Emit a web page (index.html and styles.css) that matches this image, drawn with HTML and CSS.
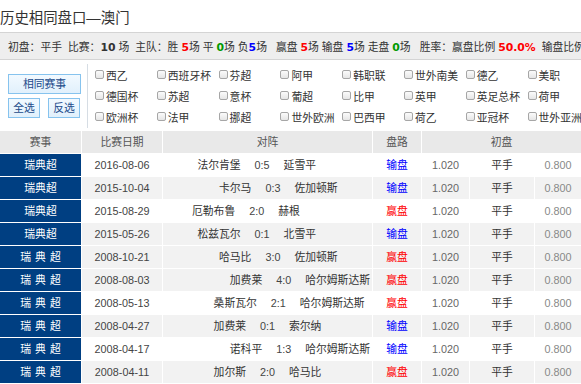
FILE: index.html
```html
<!DOCTYPE html>
<html lang="zh-CN">
<head>
<meta charset="utf-8">
<title>历史相同盘口—澳门</title>
<link rel="stylesheet" href="styles.css">
</head>
<body>
<div class="page">
  <h2 class="title">历史相同盘口—澳门</h2>
  <div class="summary">初盘：平手&nbsp; 比赛：<b class="n">10</b>&nbsp;场&nbsp; 主队：胜 <b class="n r">5</b>场 平 <b class="n g">0</b>场 负<b class="n b">5</b>场&nbsp;&nbsp; 赢盘 <b class="n r">5</b>场 输盘 <b class="n b">5</b>场 走盘 <b class="n g">0</b>场&nbsp;&nbsp; 胜率：赢盘比例 <b class="n r">50.0%</b>&nbsp; 输盘比例 <b class="n b">50.0%</b></div>
  <div class="filter">
    <div class="btns">
      <button class="btn wide">相同赛事</button>
      <div class="btn-row">
        <button class="btn">全选</button>
        <button class="btn">反选</button>
      </div>
    </div>
    <div class="leagues">
      <label class="lg"><span class="cb"></span>西乙</label>
      <label class="lg"><span class="cb"></span>西班牙杯</label>
      <label class="lg"><span class="cb"></span>芬超</label>
      <label class="lg"><span class="cb"></span>阿甲</label>
      <label class="lg"><span class="cb"></span>韩职联</label>
      <label class="lg"><span class="cb"></span>世外南美</label>
      <label class="lg"><span class="cb"></span>德乙</label>
      <label class="lg"><span class="cb"></span>美职</label>
      <label class="lg"><span class="cb"></span>德国杯</label>
      <label class="lg"><span class="cb"></span>苏超</label>
      <label class="lg"><span class="cb"></span>意杯</label>
      <label class="lg"><span class="cb"></span>葡超</label>
      <label class="lg"><span class="cb"></span>比甲</label>
      <label class="lg"><span class="cb"></span>英甲</label>
      <label class="lg"><span class="cb"></span>英足总杯</label>
      <label class="lg"><span class="cb"></span>荷甲</label>
      <label class="lg"><span class="cb"></span>欧洲杯</label>
      <label class="lg"><span class="cb"></span>法甲</label>
      <label class="lg"><span class="cb"></span>挪超</label>
      <label class="lg"><span class="cb"></span>世外欧洲</label>
      <label class="lg"><span class="cb"></span>巴西甲</label>
      <label class="lg"><span class="cb"></span>荷乙</label>
      <label class="lg"><span class="cb"></span>亚冠杯</label>
      <label class="lg"><span class="cb"></span>世外亚洲</label>
    </div>
  </div>
  <table class="hist">
    <colgroup>
      <col class="c-lg"><col class="c-date"><col class="c-vs"><col class="c-pl"><col class="c-o1"><col class="c-o2"><col class="c-o3">
    </colgroup>
    <thead>
      <tr><th>赛事</th><th>比赛日期</th><th>对阵</th><th>盘路</th><th colspan="3">初盘</th></tr>
    </thead>
    <tbody>
      <tr><td class="lgc">瑞典超</td><td class="date">2016-08-06</td><td><div class="vs" style="--d:-1"><span>法尔肯堡</span><span class="sc">0:5</span><span>延雪平</span></div></td><td class="lose">输盘</td><td class="o1">1.020</td><td class="o2">平手</td><td class="o3">0.800</td></tr>
      <tr class="alt"><td class="lgc">瑞典超</td><td class="date">2015-10-04</td><td><div class="vs" style="--d:1"><span>卡尔马</span><span class="sc">0:3</span><span>佐加顿斯</span></div></td><td class="lose">输盘</td><td class="o1">1.020</td><td class="o2">平手</td><td class="o3">0.800</td></tr>
      <tr><td class="lgc">瑞典超</td><td class="date">2015-08-29</td><td><div class="vs" style="--d:-2"><span>厄勒布鲁</span><span class="sc">2:0</span><span>赫根</span></div></td><td class="win">赢盘</td><td class="o1">1.020</td><td class="o2">平手</td><td class="o3">0.800</td></tr>
      <tr class="alt"><td class="lgc">瑞典超</td><td class="date">2015-05-26</td><td><div class="vs" style="--d:-1"><span>松兹瓦尔</span><span class="sc">0:1</span><span>北雪平</span></div></td><td class="lose">输盘</td><td class="o1">1.020</td><td class="o2">平手</td><td class="o3">0.800</td></tr>
      <tr class="alt"><td class="lgc sp">瑞典超</td><td class="date">2008-10-21</td><td><div class="vs" style="--d:1"><span>哈马比</span><span class="sc">3:0</span><span>佐加顿斯</span></div></td><td class="win">赢盘</td><td class="o1">1.020</td><td class="o2">平手</td><td class="o3">0.800</td></tr>
      <tr class="alt"><td class="lgc sp">瑞典超</td><td class="date">2008-08-03</td><td><div class="vs" style="--d:3"><span>加费莱</span><span class="sc">4:0</span><span>哈尔姆斯达斯</span></div></td><td class="win">赢盘</td><td class="o1">1.020</td><td class="o2">平手</td><td class="o3">0.800</td></tr>
      <tr><td class="lgc sp">瑞典超</td><td class="date">2008-05-13</td><td><div class="vs" style="--d:2"><span>桑斯瓦尔</span><span class="sc">2:1</span><span>哈尔姆斯达斯</span></div></td><td class="win">赢盘</td><td class="o1">1.020</td><td class="o2">平手</td><td class="o3">0.800</td></tr>
      <tr class="alt"><td class="lgc sp">瑞典超</td><td class="date">2008-04-27</td><td><div class="vs" style="--d:0"><span>加费莱</span><span class="sc">0:1</span><span>索尔纳</span></div></td><td class="lose">输盘</td><td class="o1">1.020</td><td class="o2">平手</td><td class="o3">0.800</td></tr>
      <tr><td class="lgc sp">瑞典超</td><td class="date">2008-04-17</td><td><div class="vs" style="--d:3"><span>诺科平</span><span class="sc">1:3</span><span>哈尔姆斯达斯</span></div></td><td class="lose">输盘</td><td class="o1">1.020</td><td class="o2">平手</td><td class="o3">0.800</td></tr>
      <tr class="alt"><td class="lgc sp">瑞典超</td><td class="date">2008-04-11</td><td><div class="vs" style="--d:0"><span>加尔斯</span><span class="sc">2:0</span><span>哈马比</span></div></td><td class="win">赢盘</td><td class="o1">1.020</td><td class="o2">平手</td><td class="o3">0.800</td></tr>
    </tbody>
  </table>
</div>
</body>
</html>
```
FILE: styles.css
```css
* { box-sizing: border-box; }
html, body {
  margin: 0;
  padding: 0;
  overflow: hidden;
  background: #fff;
}
body {
  font-family: "Liberation Sans", "Noto Sans CJK SC", sans-serif;
  font-size: 10.8px;
  color: #333;
}
.page { width: 600px; }

.title {
  margin: 0;
  padding-top: 8px;
  height: 32px;
  line-height: 20px;
  font-size: 14.4px;
  font-weight: normal;
  color: #333;
}

.summary {
  width: 581px;
  height: 28px;
  padding: 2px 0 0 8px;
  line-height: 24px;
  background: #eeeeee;
  border-top: 1px solid #d4d4d4;
  border-bottom: 1px solid #d4d4d4;
  white-space: nowrap;
  overflow: hidden;
  color: #333;
}
.summary .n {
  font-family: "DejaVu Sans", sans-serif;
  font-weight: bold;
  font-size: 10.8px;
}
.r { color: #ff0000; }
.g { color: #009900; }
.b { color: #0000ff; }

.filter {
  display: flex;
  padding-top: 4px;
  height: 68px;
}
.btns {
  width: 88px;
  height: 64px;
  padding: 10px 0 0 8px;
  border-right: 1px solid #d6dde4;
  display: flex;
  flex-direction: column;
  gap: 4px;
}
.btn {
  font: inherit;
  height: 20px;
  padding: 0;
  color: #1a4a8a;
  background: linear-gradient(#f2f9ff, #e1f0fc);
  border: 1px solid #86c3ee;
  border-radius: 0;
  line-height: 18px;
}
.btn.wide { width: 73px; }
.btn-row { display: flex; gap: 8px; }
.btn-row .btn { width: 32px; }

.leagues {
  display: grid;
  grid-template-columns: repeat(8, 61.8px);
  grid-auto-rows: 21px;
  padding-left: 7px;
}
.lg {
  display: flex;
  align-items: center;
  white-space: nowrap;
  color: #333;
}
.cb {
  width: 9px;
  height: 9px;
  margin-right: 2px;
  border: 1px solid #a6a6a6;
  border-radius: 2px;
  background: linear-gradient(#fbfbfb, #e6e6e6);
  flex: none;
}

.hist {
  width: 582px;
  margin-top: 3px;
  border-collapse: separate;
  border-spacing: 0;
  table-layout: fixed;
}
.c-lg { width: 82px; }
.c-date { width: 81px; }
.c-vs { width: 210px; }
.c-pl { width: 49px; }
.c-o1 { width: 48px; }
.c-o2 { width: 65px; }
.c-o3 { width: 47px; }
.hist th, .hist td {
  height: 23px;
  padding: 0;
  line-height: 14px;
  text-align: center;
  white-space: nowrap;
  border-right: 1px solid #fff;
  border-bottom: 1px solid #fff;
  font-weight: normal;
}
.hist th {
  background: #e9e9e9;
  color: #555;
}
.hist tr.alt td { background: #f2f2f2; }
.hist td.lgc, .hist tr.alt td.lgc {
  background: #003f82;
  color: #fff;
}
.hist td.sp { letter-spacing: 4px; padding-left: 4px; }
.date { color: #444; }
.vs {
  display: flex;
  justify-content: center;
  align-items: baseline;
  gap: 14px;
  transform: translateX(calc(var(--d) * 10.8px));
  color: #333;
}
.sc { color: #444; }
.lose { color: #0000ff; }
.win { color: #ff0000; }
.o1 { color: #666; }
.o2 { color: #333; }
.o3 { color: #888; }
```
